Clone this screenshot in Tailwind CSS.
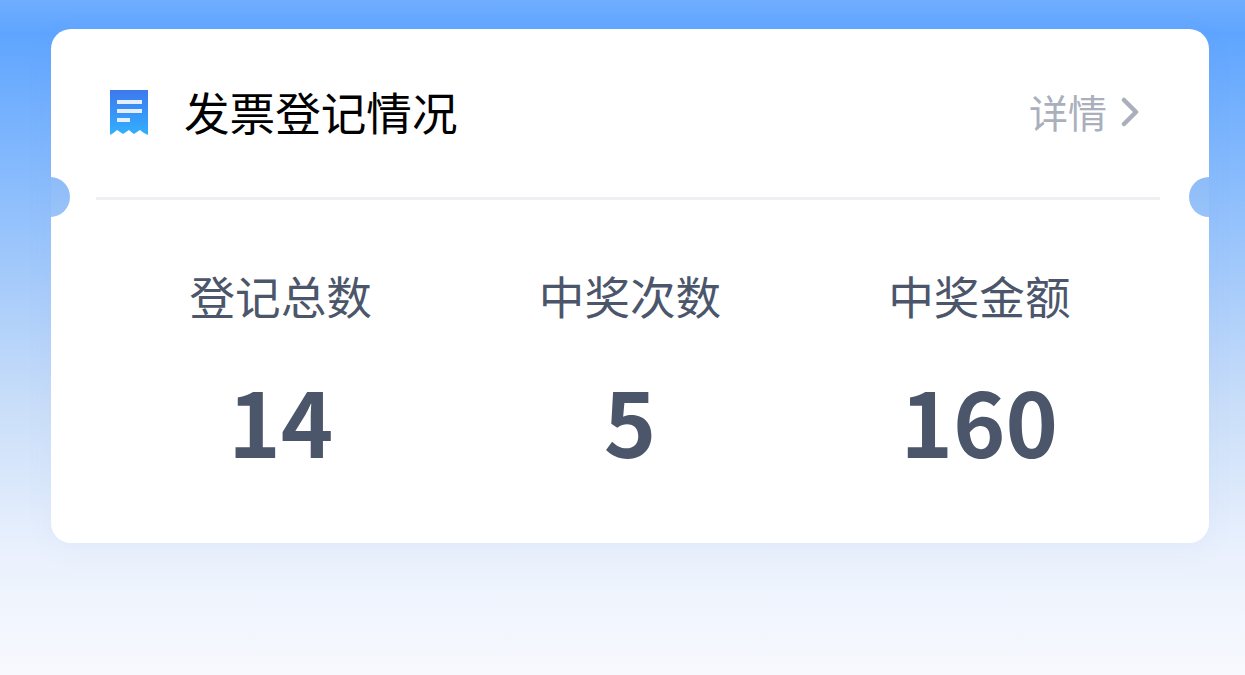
<!DOCTYPE html>
<html lang="zh-CN">

<head>
  <meta charset="UTF-8">
  <meta name="viewport" content="width=device-width, initial-scale=1.0">
  <title>发票登记情况</title>
  <script src="https://cdn.jsdelivr.net/npm/@tailwindcss/browser@4"></script>
</head>

<body class="h-[675px] overflow-hidden bg-[linear-gradient(180deg,#70adff_0%,#5fa5ff_5%,#8fbffc_30%,#c9def9_60%,#eaf1fd_82%,#f8f9fe_100%)] font-['Noto_Sans_CJK_SC','Noto_Sans',sans-serif]">
  <div class="pt-[29px] px-[51px]">
    <div class="relative h-[514px] w-[1158px] rounded-[20px] bg-white shadow-[0_6px_30px_rgba(90,120,200,0.05)]">
      <!-- notches -->
      <div class="absolute left-[-21px] top-[148px] h-10 w-10 rounded-full bg-[linear-gradient(180deg,#8dbcf8,#99c3f9)] [clip-path:inset(0_0_0_21px)]"></div>
      <div class="absolute right-[-20px] top-[148px] h-10 w-10 rounded-full bg-[linear-gradient(180deg,#8dbcf8,#99c3f9)] [clip-path:inset(0_20px_0_0)]"></div>

      <!-- header -->
      <div class="ml-[45px] mr-[49px] flex h-[171px] items-center justify-between border-b-[3px] border-[#eef0f4] pb-[3px]">
        <div class="flex items-center">
          <svg class="ml-[14px] mt-[3px] h-[46px] w-[38px]" viewBox="0 0 38 46">
            <defs>
              <linearGradient id="bill" x1="0" y1="0" x2="0" y2="1">
                <stop offset="0" stop-color="#3d78ee" />
                <stop offset="1" stop-color="#33b0ff" />
              </linearGradient>
            </defs>
            <path d="M0 0H38V45Q33 43 30 40Q27 42 24 44Q21 42 19 40Q16 42 13 44Q10 42 7 40Q4 43 0 45Z" fill="url(#bill)" />
            <rect x="7" y="10" width="25" height="4" fill="#e4f0ff" />
            <rect x="7" y="19" width="25" height="4" fill="#e4f0ff" />
            <rect x="7" y="28" width="13" height="4" fill="#e4f0ff" />
          </svg>
          <h2 class="ml-[36px] text-[45.6px] leading-none text-black">发票登记情况</h2>
        </div>
        <div class="mr-[20px] flex items-center text-[#a9afbb]">
          <span class="text-[39px] leading-none">详情</span>
          <svg class="ml-[13px] h-[30px] w-[20px]" viewBox="0 0 20 30" fill="none">
            <path d="M4 3L16 15L4 27" stroke="#a9afbb" stroke-width="4.5" stroke-linecap="round" stroke-linejoin="round" />
          </svg>
        </div>
      </div>

      <!-- stats -->
      <div class="ml-[55px] mr-[55px] grid grid-cols-3 pt-[68px] text-center text-[#4b566b]">
        <div>
          <div class="text-[45.6px] leading-[54px]">登记总数</div>
          <div class="mt-[43px] text-[89px] font-bold leading-[110px]">14</div>
        </div>
        <div>
          <div class="text-[45.6px] leading-[54px]">中奖次数</div>
          <div class="mt-[43px] text-[89px] font-bold leading-[110px]">5</div>
        </div>
        <div>
          <div class="text-[45.6px] leading-[54px]">中奖金额</div>
          <div class="mt-[43px] text-[89px] font-bold leading-[110px]">160</div>
        </div>
      </div>
    </div>
  </div>
</body>

</html>
